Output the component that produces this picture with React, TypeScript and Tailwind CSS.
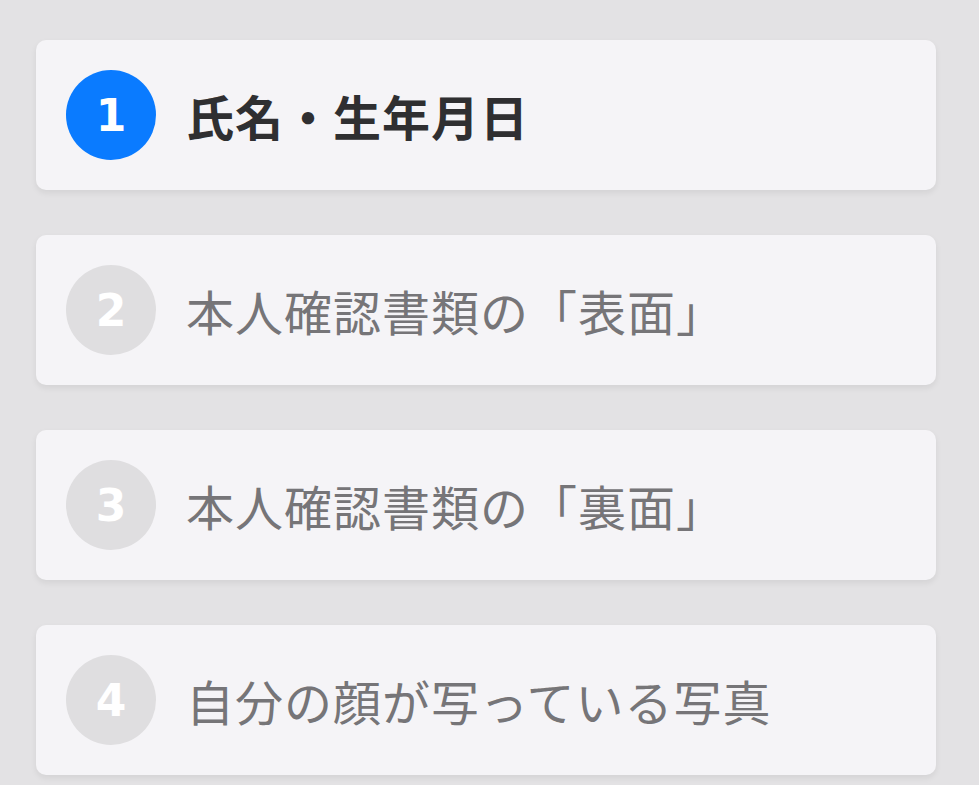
import React from "react";

const steps = [
  { n: "1", label: "氏名・生年月日", active: true },
  { n: "2", label: "本人確認書類の「表面」", active: false },
  { n: "3", label: "本人確認書類の「裏面」", active: false },
  { n: "4", label: "自分の顔が写っている写真", active: false },
];

export default function App() {
  return (
    <div className="min-h-[785px] w-full bg-[#e3e2e4] pt-[40px] pl-[36px] pr-[43px]">
      <div className="flex flex-col gap-[45px]">
        {steps.map((s) => (
          <div
            key={s.n}
            className="flex h-[150px] w-[900px] items-center rounded-[10px] bg-[#f5f4f7] pl-[30px] shadow-[0_3px_6px_rgba(0,0,0,0.07)]"
          >
            <div
              className={
                "flex h-[90px] w-[90px] shrink-0 items-center justify-center rounded-full pt-[2px] text-[44px] font-bold text-white " +
                (s.active ? "bg-[#0a7bff]" : "bg-[#dfdee0]")
              }
              style={{ fontFamily: '"DejaVu Sans", Verdana, sans-serif' }}
            >
              {s.n}
            </div>
            <div
              className={
                "ml-[30px] text-[48px] leading-none tracking-[1px] " +
                (s.active ? "font-bold text-[#2f2f31]" : "font-normal text-[#767578]")
              }
              style={{ fontFamily: '"Noto Sans CJK JP", "Noto Sans", sans-serif' }}
            >
              {s.label}
            </div>
          </div>
        ))}
      </div>
    </div>
  );
}
